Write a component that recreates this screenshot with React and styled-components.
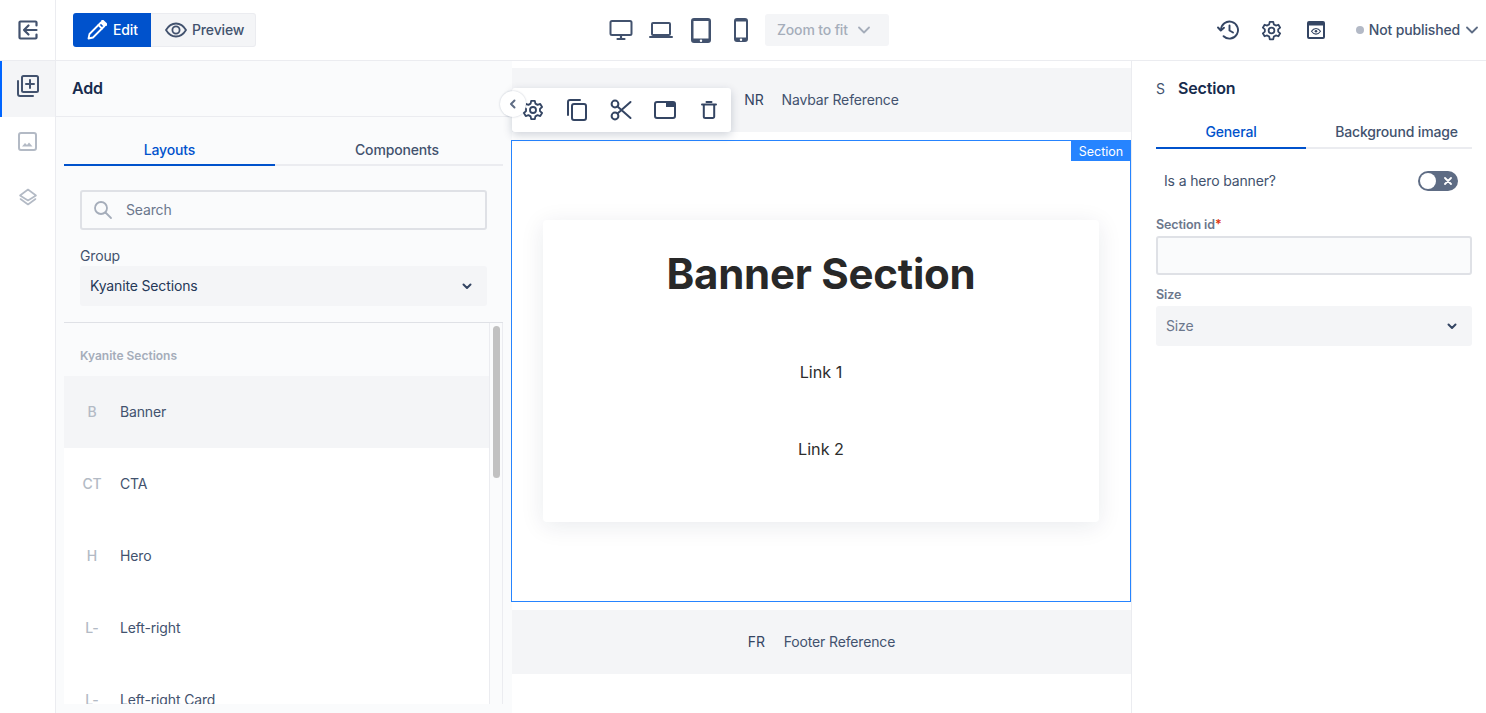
import React from "react";
import styled, { createGlobalStyle } from "styled-components";

const Global = createGlobalStyle`
  html, body { margin: 0; padding: 0; height: 100%; overflow: hidden; background: #fff; }
  * { box-sizing: border-box; }
  svg { flex: none; }
  body { font-family: Inter, "Liberation Sans", sans-serif; color: #42526e; -webkit-font-smoothing: antialiased; font-size: 14px; letter-spacing: -.15px; }
`;

const Page = styled.div`display:flex;flex-direction:column;height:713px;width:1486px;overflow:hidden;`;
const Label = styled.span`margin-bottom:2px;`;
const TopBar = styled.header`
  height:61px;flex:none;display:grid;grid-template-columns:56px 545px 1fr auto;align-items:center;
  border-bottom:1px solid #ebecf0;background:#fff;
`;
const RailTop = styled.div`height:60px;display:flex;align-items:center;justify-content:center;border-right:1px solid #ebecf0;`;
const ModeWrap = styled.div`padding-left:17px;display:flex;`;
const ModeBtn = styled.div`
  height:34px;display:flex;align-items:center;font-size:14px;font-weight:500;gap:${p=>p.$active?"6px":"5px"};
  padding-left:14px;
  width:${p=>p.$active?"78px":"105px"};
  background:${p=>p.$active?"#0052cc":"#f4f5f7"};color:${p=>p.$active?"#fff":"#42526e"};
  border:${p=>p.$active?"0":"1px solid #ebecf0"};
  border-left:0;
  border-radius:${p=>p.$active?"3px 0 0 3px":"0 3px 3px 0"};
`;
const Devices = styled.div`display:flex;align-items:center;`;
const DeviceBtn = styled.div`width:40px;height:40px;display:flex;align-items:center;justify-content:center;`;
const ZoomBtn = styled.div`
  margin-left:4px;width:124px;height:32px;border-radius:3px;background:#f4f5f7;color:#a5adba;
  font-size:14px;font-weight:500;display:flex;align-items:center;padding-left:12px;gap:10px;
`;
const TopRight = styled.div`display:flex;align-items:center;padding-right:8px;`;
const TopIcon = styled.div`width:44px;height:40px;display:flex;align-items:center;justify-content:center;`;
const Status = styled.div`display:flex;align-items:center;margin-left:18px;font-size:14px;font-weight:500;color:#42526e;gap:5px;letter-spacing:-.15px;`;
const StatusChevron = styled.span`display:flex;margin-left:1px;`;
const Dot = styled.span`width:8px;height:8px;border-radius:50%;background:#b3b9c6;`;

const Body = styled.div`flex:1;display:flex;min-height:0;`;
const Rail = styled.nav`width:56px;flex:none;border-right:1px solid #ebecf0;background:#fff;`;
const RailItem = styled.div`
  height:56px;display:flex;align-items:center;justify-content:center;
  background:${p=>p.$active?"#f4f5f7":"#fff"};
  border-left:2px solid ${p=>p.$active?"#0065ff":"transparent"};
  padding:0 2px 6px 0;
`;
const AddPanel = styled.aside`width:456px;flex:none;background:#fafbfc;display:flex;flex-direction:column;padding-bottom:9px;`;
const PanelHeader = styled.div`
  height:56px;flex:none;display:flex;align-items:center;padding:0 0 2px 16px;gap:10px;
  font-size:16px;font-weight:600;color:#172b4d;border-bottom:${p=>p.$line?"1px solid #ebecf0":"0"};
`;
const Tabs = styled.div`
  display:grid;grid-template-columns:${p=>p.$cols};flex:none;margin:${p=>p.$margin};height:${p=>p.$height};
`;
const Tab = styled.div`
  display:flex;align-items:center;justify-content:center;font-size:14px;font-weight:500;
  padding:${p=>p.$pt || 0}px 0 2px ${p=>p.$pl || 0}px;
  color:${p=>p.$active?"#0052cc":"#42526e"};
  border-bottom:2px solid ${p=>p.$active?"#0052cc":"#ebecf0"};
`;
const SearchBox = styled.div`
  flex:none;margin:24px 25px 0 24px;height:40px;border:2px solid #dfe1e6;border-radius:3px;display:flex;align-items:center;
  padding-left:11px;gap:13px;font-size:14px;color:#6b778c;
`;
const GroupLabel = styled.div`flex:none;margin:17px 0 1px 24px;font-size:14px;line-height:18px;height:18px;color:#42526e;`;
const SelectBox = styled.div`
  flex:none;height:40px;background:#f4f5f7;border-radius:3px;display:flex;align-items:center;justify-content:space-between;
  margin:${p=>p.$margin};padding:0 15px 0 ${p=>p.$pl};font-size:14px;color:${p=>p.$muted?"#6b778c":"#253858"};
`;
const ListArea = styled.div`flex:1;min-height:0;margin:16px 9px 0 8px;border-top:1px solid #dfe1e6;display:flex;`;
const List = styled.div`flex:1;overflow:hidden;`;
const ListHead = styled.div`height:53px;padding:26px 0 0 16px;font-size:12px;line-height:14px;letter-spacing:0;font-weight:600;color:#a5adba;background:#fafbfc;`;
const ListItem = styled.div`
  height:72px;display:flex;align-items:center;font-size:14px;color:#42526e;padding-bottom:2px;
  background:${p=>p.$active?"#f4f5f7":"#fff"};
`;
const Letter = styled.span`width:56px;text-align:center;color:#b3bac5;font-size:14px;font-weight:500;`;
const Track = styled.div`width:14px;flex:none;border-left:1px solid #ebecf0;border-right:1px solid #ebecf0;padding:3px 3px 0;`;
const Thumb = styled.div`height:152px;width:7px;border-radius:4px;background:#c1c1c1;`;

const Canvas = styled.main`
  width:619px;flex:none;position:relative;display:flex;flex-direction:column;gap:8px;padding-top:7px;background:#fff;
`;
const RefBar = styled.div`
  height:64px;flex:none;background:#f4f5f7;display:flex;align-items:center;justify-content:center;gap:${p=>p.$gap};
  font-size:14px;color:#42526e;padding-bottom:2px;
`;
const RefCode = styled.span`color:#344563;`;
const Section = styled.section`
  height:462px;flex:none;position:relative;border:1px solid #2684ff;margin-left:-1px;padding:79px 31px;
  width:620px;background:#fff;
`;
const Badge = styled.span`
  position:absolute;top:0;right:-1px;width:60px;height:20px;background:#2684ff;color:#fff;font-size:12.5px;letter-spacing:0;
  display:flex;align-items:center;justify-content:center;
`;
const Card = styled.div`
  height:302px;background:#fff;border-radius:4px;box-shadow:0 4px 24px rgba(9,30,66,.09);
  display:flex;flex-direction:column;align-items:center;color:#282828;
`;
const Heading = styled.h1`margin:26px 0 0;font-size:42px;line-height:56px;font-weight:700;color:#282828;letter-spacing:-.25px;`;
const CardLink = styled.div`font-size:16.2px;line-height:24px;letter-spacing:0;color:#2d2d2d;margin-top:${p=>p.$top};`;

const ToolBar = styled.div`
  position:absolute;left:0;top:27px;width:219px;height:44px;background:#fff;border-radius:3px;
  box-shadow:0 3px 10px rgba(9,30,66,.2);display:flex;align-items:center;
`;
const ToolBtn = styled.div`width:44px;height:44px;display:flex;align-items:center;justify-content:center;margin-left:${p=>p.$first?"-1px":"0"};`;
const Collapse = styled.div`
  position:absolute;left:-12px;top:30px;width:26px;height:26px;border-radius:50%;background:#fff;
  box-shadow:0 0 2px rgba(9,30,66,.25);display:flex;align-items:center;justify-content:center;
`;

const RightPanel = styled.aside`flex:1;background:#fff;border-left:1px solid #ebecf0;display:flex;flex-direction:column;padding:0 14px 0 24px;`;
const ShortCode = styled.span`font-size:14px;font-weight:400;color:#42526e;width:12px;`;
const RightHead = styled(PanelHeader)`padding-left:0;`;
const ToggleRow = styled.div`
  display:flex;align-items:center;justify-content:space-between;margin-top:20px;height:24px;padding:0 14px 0 8px;
  font-size:14px;color:#42526e;
`;
const Toggle = styled.div`
  width:40px;height:20px;border-radius:10px;background:#5e6c84;padding:2px 6px 2px 2px;display:flex;align-items:center;justify-content:space-between;
`;
const Knob = styled.span`width:16px;height:16px;border-radius:50%;background:#fff;`;
const FieldLabel = styled.div`font-size:12.5px;line-height:16px;letter-spacing:-.1px;font-weight:600;color:#6b778c;margin:${p=>p.$top} 0 3px;`;
const Req = styled.span`color:#de350b;`;
const TextField = styled.div`height:39px;background:#fafbfc;border:2px solid #dfe1e6;border-radius:3px;`;

const Ic = ({ w = 24, h = 24, c = "#42526e", sw = 2, vb, children }) => (
  <svg width={w} height={h} viewBox={vb || `0 0 ${w} ${h}`} fill="none" stroke={c} strokeWidth={sw} strokeLinecap="round" strokeLinejoin="round">{children}</svg>
);
const Exit = () => (
  <Ic w={20} h={20} c="#42526e" sw={2.2}><path d="M18.500 5.500V2.500a1 1 0 0 0-1-1H2.500a1 1 0 0 0-1 1v15a1 1 0 0 0 1 1h15a1 1 0 0 0 1-1v-3" /><path d="M18.500 10H6M10.500 5.500 6 10l4.500 4.500" /></Ic>
);
const AddIco = () => (
  <Ic w={22} h={22} c="#42526e"><rect x="5" y="1" width="16" height="16" rx="1.500" /><path d="M1 6v13a2 2 0 0 0 2 2h13M13 5v8M9 9h8" /></Ic>
);
const ImgIco = () => (
  <Ic w={20} h={20} c="#b3bac5"><rect x="1" y="1" width="17" height="17" rx="2" /><path d="M4 14.500l3-3.500 2 2 2-2.500 3.500 4z" fill="#b3bac5" stroke="none" /></Ic>
);
const LayersIco = () => (
  <Ic w={20} h={20} c="#b3bac5" sw={1.600}><path d="M10 1.500 18 7.500 10 12.500 2 7.500z" /><path d="M2.500 11 10 16.500 17.500 11" /></Ic>
);
const Pencil = () => (
  <Ic w={20} h={20} c="#fff" sw={1.800}><path d="M14 2.500 17.500 6 6 17.500l-4.500 1 1-4.500z" /><path d="M11.500 5 15 8.500" /><path d="M15.600 1.200l3.200 3.200" strokeWidth="3" /></Ic>
);
const Eye = () => (
  <Ic w={22} h={16} c="#42526e" sw={1.800}><path d="M1 8c2.500-4.200 6-6.500 10-6.500S18.500 3.800 21 8c-2.500 4.200-6 6.500-10 6.500S3.500 12.200 1 8z" /><circle cx="11" cy="8" r="3.600" /></Ic>
);
const Desktop = () => (
  <Ic w={24} h={22} vb="0 0 24 22" sw={2}><rect x="1.500" y="2" width="21" height="14" rx="1.500" /><path d="M12 16v3M8.500 20h7" strokeWidth="2.200" /></Ic>
);
const Laptop = () => (
  <Ic w={24} h={18} vb="0 0 24 18" sw={2}><rect x="3" y="2" width="18" height="12" rx="1" /><path d="M1 16h22" /></Ic>
);
const Tablet = () => (
  <svg width="20" height="25" viewBox="0 0 20 25"><path fillRule="evenodd" clipRule="evenodd" d="M3 0h14a3 3 0 0 1 3 3v19a3 3 0 0 1-3 3H3a3 3 0 0 1-3-3V3a3 3 0 0 1 3-3zm-.500 3v17.500h15V3z" fill="#42526e" /><circle cx="10" cy="22.700" r="1.200" fill="#fff" /></svg>
);
const Phone = () => (
  <svg width="14" height="24" viewBox="0 0 14 24"><path fillRule="evenodd" clipRule="evenodd" d="M3 0h8a3 3 0 0 1 3 3v18a3 3 0 0 1-3 3H3a3 3 0 0 1-3-3V3a3 3 0 0 1 3-3zM2 3.500v16h10v-16z" fill="#42526e" /><circle cx="7" cy="21.700" r="1.200" fill="#fff" /></svg>
);
const Chevron = ({ c = "#a5adba", w = 12 }) => (
  <Ic w={w} h={8} vb="0 0 12 8" c={c} sw={1.800}><path d="M1 1.500 6 6.500l5-5" /></Ic>
);
const SmallChev = () => (
  <Ic w={10} h={7} vb="0 0 10 7" c="#344563" sw={2}><path d="M1.500 1.500 5 5l3.500-3.500" /></Ic>
);
const History = () => (
  <Ic w={22} h={20} vb="0 0 22 20" c="#344563" sw={1.900}><path d="M4 10a8.500 8.500 0 1 1 2.600 6.200" /><path d="M1 7.500 3.800 10.500 7 7.800" /><path d="M12.500 5.500V10.500l3.500 2" /></Ic>
);
const Gear = ({ size = 20 }) => (
  <svg width={size} height={size} viewBox="0 0 24 24" fill="none" stroke="#344563" strokeWidth="2" strokeLinecap="round" strokeLinejoin="round"><path d="M10 2h4l.6 3 2.400 1.400 2.900-1 2 3.400-2.300 2v2.400l2.300 2-2 3.400-2.900-1-2.400 1.400-.6 3h-4l-.6-3L7 17.600l-2.900 1-2-3.400 2.300-2v-2.400l-2.300-2 2-3.400 2.900 1L9.400 5z" /><circle cx="12" cy="12" r="3.300" /></svg>
);
const PreviewWin = () => (
  <svg width="18" height="18" viewBox="0 0 18 18"><path fillRule="evenodd" clipRule="evenodd" d="M2 0h14a2 2 0 0 1 2 2v14a2 2 0 0 1-2 2H2a2 2 0 0 1-2-2V2a2 2 0 0 1 2-2zm0 4.500V16h14V4.500z" fill="#344563" /><path d="M4.500 10.300c1.200-1.900 2.700-2.800 4.500-2.800s3.300.9 4.500 2.800c-1.200 1.900-2.700 2.800-4.500 2.800s-3.300-.9-4.500-2.800z" fill="none" stroke="#344563" strokeWidth="1.100" /><circle cx="9" cy="10.300" r="1.300" fill="#344563" /></svg>
);
const Search = () => (
  <Ic w={20} h={20} c="#a5adba" sw={1.800}><circle cx="8" cy="8" r="6" /><path d="M12.500 12.500 18 18" /></Ic>
);
const Copy = () => (
  <Ic w={20} h={22} vb="0 0 20 22" c="#344563" sw={2}><path d="M1 16V3a2 2 0 0 1 2-2h10" /><rect x="5" y="5" width="14" height="16" rx="2" /></Ic>
);
const Scissors = () => (
  <Ic w={22} h={22} c="#344563" sw={2}><circle cx="5" cy="5" r="3.400" /><circle cx="5" cy="17" r="3.400" /><path d="M7.500 7.500 20.500 19M7.500 14.500 20.500 3" /></Ic>
);
const WindowIco = () => (
  <svg width="22" height="18" viewBox="0 0 22 18"><rect x="1" y="1" width="20" height="16" rx="2" fill="none" stroke="#344563" strokeWidth="2" /><path d="M12 1h7a2 2 0 0 1 2 2v3h-9z" fill="#344563" /></svg>
);
const Trash = () => (
  <Ic w={16} h={18} vb="0 0 16 18" c="#344563" sw={2}><path d="M1 3.500h14M5.500 1h5M2.800 4v11.500a1.500 1.500 0 0 0 1.500 1.500h7.400a1.500 1.500 0 0 0 1.500-1.500V4" /></Ic>
);
const BackChev = () => (
  <Ic w={8} h={10} vb="0 0 8 10" c="#5e6c84" sw={2}><path d="M5.500 1.500 2 5l3.500 3.500" /></Ic>
);
const Cross = () => (
  <Ic w={8} h={8} c="#fff" sw={1.800}><path d="M1 1l6 6M7 1 1 7" /></Ic>
);

const items = [
  ["B", "Banner", true],
  ["CT", "CTA"],
  ["H", "Hero"],
  ["L-", "Left-right"],
  ["L-", "Left-right Card"],
];

export default function App() {
  return (
    <Page>
      <Global />
      <TopBar>
        <RailTop><Exit /></RailTop>
        <ModeWrap>
          <ModeBtn $active><Pencil /><Label>Edit</Label></ModeBtn>
          <ModeBtn><Eye /><Label>Preview</Label></ModeBtn>
        </ModeWrap>
        <Devices>
          <DeviceBtn><Desktop /></DeviceBtn>
          <DeviceBtn><Laptop /></DeviceBtn>
          <DeviceBtn><Tablet /></DeviceBtn>
          <DeviceBtn><Phone /></DeviceBtn>
          <ZoomBtn><Label>Zoom to fit</Label><Chevron /></ZoomBtn>
        </Devices>
        <TopRight>
          <TopIcon><History /></TopIcon>
          <TopIcon><Gear size={21} /></TopIcon>
          <TopIcon><PreviewWin /></TopIcon>
          <Status><Dot /><Label>Not published</Label><StatusChevron><Chevron c="#5e6c84" /></StatusChevron></Status>
        </TopRight>
      </TopBar>
      <Body>
        <Rail>
          <RailItem $active><AddIco /></RailItem>
          <RailItem><ImgIco /></RailItem>
          <RailItem><LayersIco /></RailItem>
        </Rail>
        <AddPanel>
          <PanelHeader $line>Add</PanelHeader>
          <Tabs $cols="211px 228px" $margin="0 9px 0 8px" $height="49px">
            <Tab $active $pt={19}>Layouts</Tab>
            <Tab $pt={19} $pl={16}>Components</Tab>
          </Tabs>
          <SearchBox><Search /><Label>Search</Label></SearchBox>
          <GroupLabel>Group</GroupLabel>
          <SelectBox $margin="0 25px 0 24px" $pl="10px"><Label>Kyanite Sections</Label><SmallChev /></SelectBox>
          <ListArea>
            <List>
              <ListHead>Kyanite Sections</ListHead>
              {items.map(([l, t, a]) => (
                <ListItem key={t} $active={a}><Letter>{l}</Letter>{t}</ListItem>
              ))}
            </List>
            <Track><Thumb /></Track>
          </ListArea>
        </AddPanel>
        <Canvas>
          <RefBar $gap="18px"><RefCode>NR</RefCode>Navbar Reference</RefBar>
          <Section>
            <Badge>Section</Badge>
            <Card>
              <Heading>Banner Section</Heading>
              <CardLink $top="58px">Link 1</CardLink>
              <CardLink $top="53px">Link 2</CardLink>
            </Card>
          </Section>
          <RefBar $gap="19px"><RefCode>FR</RefCode>Footer Reference</RefBar>
          <ToolBar>
            <ToolBtn $first><Gear size={22} /></ToolBtn>
            <ToolBtn><Copy /></ToolBtn>
            <ToolBtn><Scissors /></ToolBtn>
            <ToolBtn><WindowIco /></ToolBtn>
            <ToolBtn><Trash /></ToolBtn>
          </ToolBar>
          <Collapse><BackChev /></Collapse>
        </Canvas>
        <RightPanel>
          <RightHead><ShortCode>S</ShortCode>Section</RightHead>
          <Tabs $cols="150px 166px" $margin="0" $height="32px">
            <Tab $active>General</Tab>
            <Tab $pl={15}>Background image</Tab>
          </Tabs>
          <ToggleRow><Label>Is a hero banner?</Label><Toggle><Knob /><Cross /></Toggle></ToggleRow>
          <FieldLabel $top="24px">Section id<Req>*</Req></FieldLabel>
          <TextField />
          <FieldLabel $top="12px">Size</FieldLabel>
          <SelectBox $margin="0" $pl="10px" $muted><Label>Size</Label><SmallChev /></SelectBox>
        </RightPanel>
      </Body>
    </Page>
  );
}
